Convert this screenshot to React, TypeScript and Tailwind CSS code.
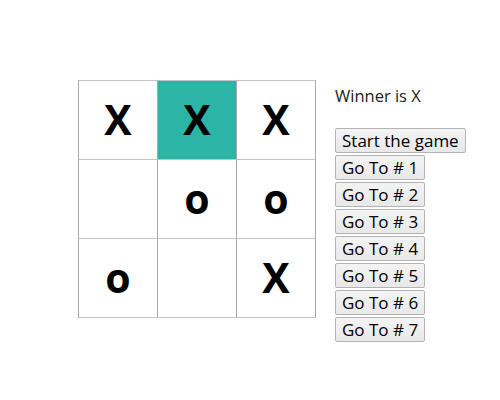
import React from "react";

const cells: { v: string; hl?: boolean }[] = [
  { v: "X" }, { v: "X", hl: true }, { v: "X" },
  { v: "" }, { v: "o" }, { v: "o" },
  { v: "o" }, { v: "" }, { v: "X" },
];

export default function App() {
  return (
    <div className="w-[500px] h-[400px] bg-white flex items-start pl-[78px] pt-[80px]" style={{ fontFamily: '"Open Sans", "Noto Sans", sans-serif' }}>
      <div className="grid grid-cols-[79px_79px_80px] grid-rows-[79px_79px_80px]">
        {cells.map((c, i) => (
          <div
            key={i}
            className={`border-l border-t border-l-[#a8a8a8] border-t-[#c4c4c4] flex items-center justify-center text-[41px] font-bold text-black leading-none pb-[2px] ${i % 3 === 2 ? "border-r border-r-[#a8a8a8]" : ""} ${i >= 6 ? "border-b border-b-[#c4c4c4]" : ""} ${c.hl ? "bg-[#2ab5a7]" : "bg-white"}`}
          >
            {c.v}
          </div>
        ))}
      </div>
      <div className="ml-[19px] flex flex-col items-start text-[16.5px] text-[#222]">
        <div className="leading-[21px] mt-[5px]">Winner is X</div>
        <div className="mt-[22px] flex flex-col items-start gap-[2px]">
          {["Start the game", "Go To # 1", "Go To # 2", "Go To # 3", "Go To # 4", "Go To # 5", "Go To # 6", "Go To # 7"].map((t) => (
            <button
              key={t}
              className="h-[25px] px-[6px] leading-[21px] text-[17px] text-black bg-gradient-to-b from-[#f4f4f4] to-[#e8e8e8] border border-[#b3b3b3] rounded-[2px]"
            >
              {t}
            </button>
          ))}
        </div>
      </div>
    </div>
  );
}
